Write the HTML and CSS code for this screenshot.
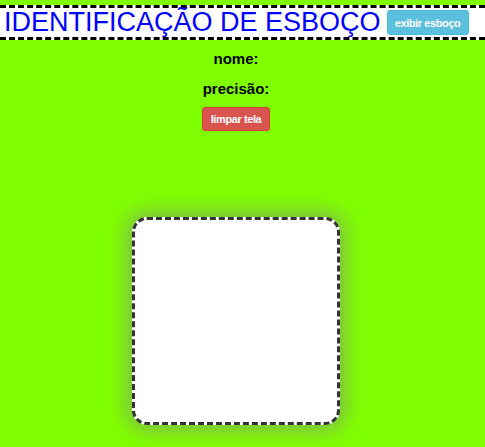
FILE: index.html
```html
<!DOCTYPE html>
<html lang="pt">
<head>
<meta charset="utf-8">
<title>Identificação de esboço</title>
<link rel="stylesheet" href="styles.css">
</head>
<body>
<header class="topbar">
  <h1 class="title">IDENTIFICAÇÃO DE ESBOÇO</h1>
  <button class="btn btn-info">exibir esboço</button>
</header>
<main class="content">
  <p class="label">nome:</p>
  <p class="label">precisão:</p>
  <button class="btn btn-danger">limpar tela</button>
  <div class="canvas"></div>
</main>
</body>
</html>
```

FILE: styles.css
```css
html, body {
  margin: 0;
  padding: 0;
}
body {
  background: #80ff00;
  font-family: "Liberation Sans", Arial, sans-serif;
  padding-top: 5px;
  height: 442px;
  overflow: hidden;
}
.topbar {
  display: flex;
  align-items: center;
  background: #fff;
  border-top: 3px dashed #000;
  border-bottom: 3px dashed #000;
  height: 29px;
  padding-left: 4px;
}
.title {
  margin: 0;
  font-weight: normal;
  font-size: 27px;
  line-height: 29px;
  color: #0000ff;
  white-space: nowrap;
}
.btn {
  font-family: "Liberation Sans", Arial, sans-serif;
  font-size: 11px;
  font-weight: bold;
  color: #fff;
  border-radius: 3px;
  border: 1px solid transparent;
  padding: 0;
  letter-spacing: -0.4px;
}
.btn-info {
  background: #5bc0de;
  border-color: #46b8da;
  width: 82px;
  height: 25px;
  margin-left: 6px;
}
.btn-danger {
  background: #d9534f;
  border-color: #d43f3a;
  width: 68px;
  height: 24px;
}
.content {
  display: flex;
  flex-direction: column;
  align-items: center;
  padding-right: 13px;
}
.label {
  margin: 0;
  font-size: 15px;
  font-weight: bold;
  color: #000;
  line-height: 17px;
}
.label:first-child {
  margin-top: 10px;
}
.label + .label {
  margin-top: 13px;
}
.label + .btn {
  margin-top: 10px;
}
.canvas {
  margin-top: 86px;
  width: 202px;
  height: 202px;
  background: #fff;
  border: 3px dashed #333;
  border-radius: 15px;
  box-shadow: 0 0 20px 6px rgba(130, 130, 130, 0.55);
}
```
